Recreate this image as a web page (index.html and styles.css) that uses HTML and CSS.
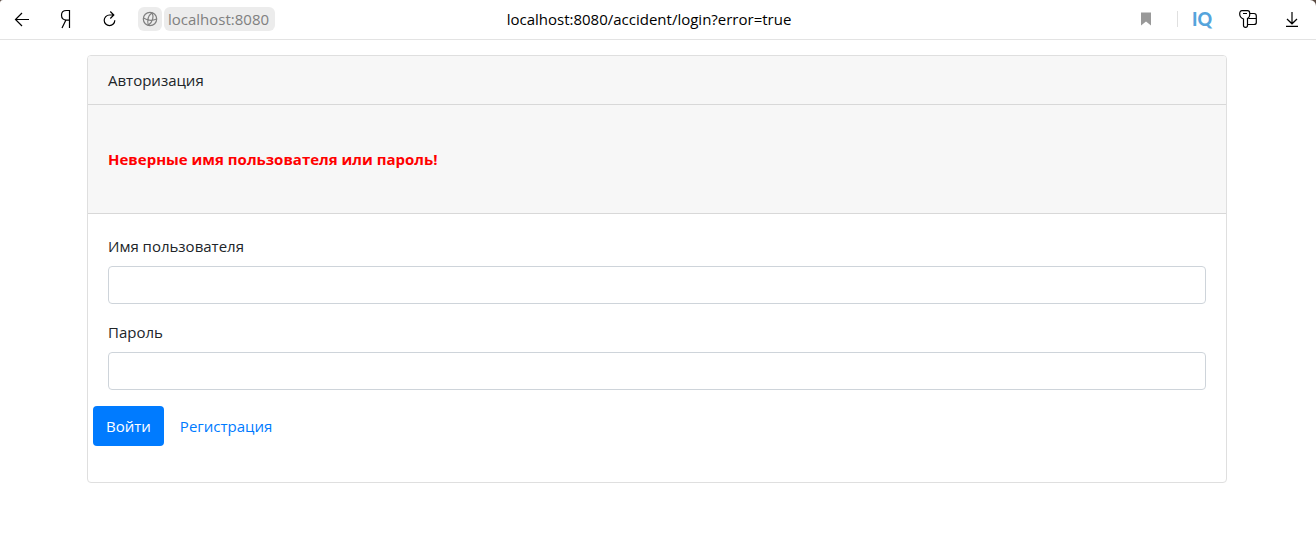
FILE: index.html
```html
<!DOCTYPE html>
<html lang="ru">
<head>
<meta charset="utf-8">
<title>Авторизация</title>
<link rel="stylesheet" href="styles.css">
</head>
<body>
<header class="browser">
  <div class="toolbar">
    <nav class="side">
      <button class="tool" type="button" aria-label="Назад">
        <svg width="16" height="16" viewBox="0 0 16 16"><path d="M15 8.500H1.500M8 2L1.500 8.500L8 15"/></svg>
      </button>
      <button class="tool" type="button" aria-label="Яндекс">
        <svg width="12" height="20" viewBox="0 0 12 20"><path d="M9.500 19V1.500H6.500C3.500 1.500 1.500 3.200 1.500 6.300S3.500 11.200 6.500 11.200H9.500M5.800 11.200L2 19"/></svg>
      </button>
      <button class="tool" type="button" aria-label="Обновить">
        <svg width="16" height="18" viewBox="0 0 16 18"><path d="M11.500 5H7.500A5.300 5.300 0 1 0 12.800 10.300M8.300 1.500L11.800 5L8.300 8.500"/></svg>
      </button>
      <div class="site">
        <button class="chip globe" type="button" aria-label="О сайте">
          <svg width="16" height="16" viewBox="0 0 16 16"><circle cx="8" cy="8" r="6.700"/><path d="M10 1.800C6.500 4.500 5 9.500 6.300 14.300M10 1.800C12 5.500 11 11 6.300 14.300M1.500 7C5.500 9.500 10.500 9.800 14.500 8"/></svg>
        </button>
        <button class="chip" type="button">localhost:8080</button>
      </div>
    </nav>
    <div class="url">localhost:8080/accident/login?error=true</div>
    <div class="side end">
      <button class="tool" type="button" aria-label="Закладка">
        <svg width="10" height="14" viewBox="0 0 10 14"><path class="mark" d="M0 0.500H10V13.500L5 9.500L0 13.500Z"/></svg>
      </button>
      <span class="divider"></span>
      <button class="tool iq" type="button">IQ</button>
      <button class="tool" type="button" aria-label="Пароли">
        <svg width="18" height="18" viewBox="0 0 18 18"><path d="M3 0.700H8.500Q10.700 0.700 10.700 3V5Q10.700 7.500 8.500 8.500V15.500Q8.500 17.300 6.500 17.300T4.500 15.500V9Q0.700 7.500 0.700 4Q0.700 0.700 3 0.700ZM4 3.500H8M11 3.500H15Q17.300 3.500 17.300 6V12.500Q17.300 14.500 15 14.500H8.500M9.500 8.500H17"/></svg>
      </button>
      <button class="tool" type="button" aria-label="Загрузки">
        <svg width="14" height="16" viewBox="0 0 14 16"><path d="M7 1V12.500M2 8L7 12.800L12 8M1 15.300H13"/></svg>
      </button>
    </div>
  </div>
</header>
<main class="page">
  <section class="card">
    <div class="card-header">Авторизация</div>
    <div class="card-header error" role="alert">Неверные имя пользователя или пароль!</div>
    <form class="card-body">
      <div class="field">
        <label for="username">Имя пользователя</label>
        <input id="username" name="username" type="text">
      </div>
      <div class="field">
        <label for="password">Пароль</label>
        <input id="password" name="password" type="password">
      </div>
      <div class="actions">
        <button class="submit" type="submit">Войти</button>
        <a href="reg">Регистрация</a>
      </div>
    </form>
  </section>
</main>
</body>
</html>
```
FILE: styles.css
```css
* { box-sizing: border-box; }

body {
  margin: 0;
  background: #fff;
  color: #212529;
  font: 15px/24px "Open Sans", "Noto Sans", sans-serif;
}

button, input { font: inherit; color: inherit; }
button { padding: 0; border: 0; background: none; cursor: pointer; }

.browser { background: #5a4a42; }

.toolbar {
  display: grid;
  grid-template-columns: 1fr auto 1fr;
  align-items: center;
  height: 40px;
  padding: 0 16px 1px 14px;
  border-bottom: 1px solid #e3e3e3;
  border-radius: 3px 6px 0 0;
  background: #fff;
  color: #000;
}

.side { display: flex; align-items: center; gap: 28px; }
.tool { display: flex; align-items: center; justify-content: center; min-width: 16px; }

svg { display: block; fill: none; stroke: #000; stroke-width: 1.2; }

.site { display: flex; gap: 2px; margin-left: -8px; }
.chip {
  height: 24px;
  padding: 0 6px 0 4px;
  border-radius: 6px;
  background: #ececec;
  color: #808080;
}
.globe { padding: 0 4px; }
.globe svg { stroke: #808080; }

.url { margin-right: 16px; }

.mark { fill: #999; stroke: none; }
.end { justify-content: flex-end; gap: 27px; }
.divider { width: 1px; height: 16px; margin: 0 -13px 0 -4px; background: #e0e0e0; }
.iq { color: #55a4dc; font: 900 18px/24px Lato, sans-serif; }

.page { max-width: 1172px; margin: 0 auto; padding: 15px 17px 24px 15px; }

.card { border: 1px solid #dfdfdf; border-radius: 4px; overflow: hidden; }
.card-header { padding: 12px 20px; border-bottom: 1px solid #d8d8d8; background: #f7f7f7; }
.error { padding: 42px 20px; color: #f00; font-weight: 700; }

.card-body { padding: 20px 20px 36px; }
.field { margin-bottom: 16px; }
.field label { display: block; margin-bottom: 8px; }
.field input {
  display: block;
  width: 100%;
  height: 38px;
  padding: 6px 12px;
  border: 1px solid #ced4da;
  border-radius: 4px;
  background: #fff;
}

.actions { display: flex; align-items: center; gap: 16px; margin-left: -15px; }
.submit { height: 40px; padding: 0 13px; border-radius: 4px; background: #007bff; color: #fff; }
.actions a { color: #007bff; text-decoration: none; }
```
